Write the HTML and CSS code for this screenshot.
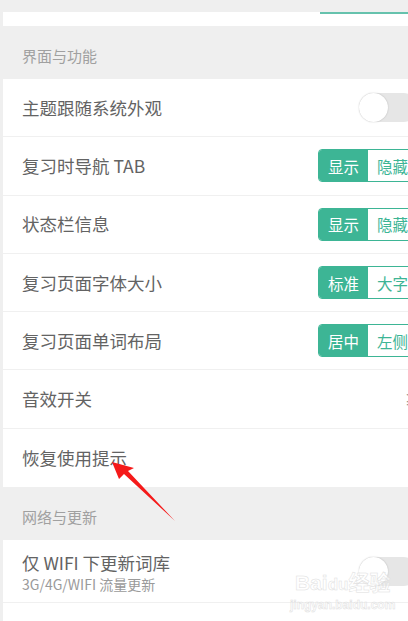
FILE: index.html
```html
<!DOCTYPE html>
<html lang="zh">
<head>
<meta charset="utf-8">
<link rel="stylesheet" href="styles.css">
</head>
<body>
<div class="page">
  <div class="top-card"><div class="top-line"></div></div>

  <div class="section-title">界面与功能</div>
  <div class="group">
    <div class="row">
      <span class="label">主题跟随系统外观</span>
      <span class="switch"><span class="knob"></span></span>
    </div>
    <div class="row">
      <span class="label">复习时导航 TAB</span>
      <span class="seg"><span class="seg-on">显示</span><span class="seg-off">隐藏</span></span>
    </div>
    <div class="row">
      <span class="label">状态栏信息</span>
      <span class="seg"><span class="seg-on">显示</span><span class="seg-off">隐藏</span></span>
    </div>
    <div class="row">
      <span class="label">复习页面字体大小</span>
      <span class="seg"><span class="seg-on">标准</span><span class="seg-off">大字</span></span>
    </div>
    <div class="row">
      <span class="label">复习页面单词布局</span>
      <span class="seg"><span class="seg-on">居中</span><span class="seg-off">左侧</span></span>
    </div>
    <div class="row">
      <span class="label">音效开关</span>
      <span class="edge-mark">≥</span>
    </div>
    <div class="row last">
      <span class="label">恢复使用提示</span>
    </div>
  </div>

  <div class="section-title">网络与更新</div>
  <div class="group">
    <div class="row tall">
      <span class="label-stack">
        <span class="label">仅 WIFI 下更新词库</span>
        <span class="sub">3G/4G/WIFI 流量更新</span>
      </span>
      <span class="switch"><span class="knob"></span></span>
    </div>
    <div class="row">
      <span class="label">词库更新</span>
    </div>
  </div>

  <div class="watermark"><span class="wm-main">Bai<span class="wm-du">du</span>经验</span><span class="wm-url">jingyan.baidu.com</span></div>

  <svg class="arrow" width="408" height="621" viewBox="0 0 408 621">
    <polygon points="112,462 134,468 128,471 175,521 124,474 119,479" fill="#f51a1a"/>
  </svg>
</div>
</body>
</html>
```

FILE: styles.css
```css
* { box-sizing: border-box; }
html, body {
  margin: 0;
  padding: 0;
  width: 408px;
  height: 621px;
  overflow: hidden;
  background: #efefef;
}
.page {
  position: relative;
  width: 408px;
  height: 621px;
  overflow: hidden;
  padding-top: 12px;
  padding-left: 3px;
  font-family: "Noto Sans CJK SC", "Noto Sans", sans-serif;
}
.top-card {
  height: 14px;
  background: #fff;
  display: flex;
  justify-content: flex-end;
}
.top-line {
  width: 88px;
  height: 2px;
  background: #66c2ad;
}
.section-title {
  height: 53px;
  padding: 20px 0 0 19px;
  font-size: 15px;
  line-height: 20px;
  color: #a0a0a0;
}
.group {
  background: #fff;
}
.row {
  height: 58.3px;
  border-bottom: 1px solid #f0f0f0;
  display: flex;
  align-items: center;
  justify-content: space-between;
  padding-left: 19px;
  margin-right: -10px;
}
.row.last { border-bottom: none; }
.row.tall { height: 63px; }
.label {
  font-size: 17.5px;
  color: #636363;
  line-height: 22px;
}
.label-stack {
  display: flex;
  flex-direction: column;
  padding-top: 2px;
}
.sub {
  font-size: 14px;
  color: #9a9a9a;
  line-height: 18px;
  margin-top: 1px;
}
.switch {
  position: relative;
  width: 59px;
  height: 29px;
  border-radius: 15px;
  background: #e6e6e6;
  flex: none;
}
.knob {
  position: absolute;
  left: 0;
  top: 0;
  width: 29px;
  height: 29px;
  border-radius: 50%;
  background: #fff;
  box-shadow: 0 0 1.5px rgba(0,0,0,0.25);
}
.seg {
  display: flex;
  height: 33px;
  width: 100px;
  flex: none;
  border: 1px solid #3db595;
  border-radius: 4px;
  overflow: hidden;
  font-size: 15.5px;
}
.seg-on {
  width: 49px;
  background: #3db595;
  color: #fff;
  display: flex;
  align-items: center;
  justify-content: center;
}
.seg-off {
  flex: 1;
  background: #fff;
  color: #3db595;
  display: flex;
  align-items: center;
  justify-content: center;
}
.edge-mark {
  font-size: 14px;
  color: #888;
  width: 13px;
  overflow: hidden;
}
.watermark {
  position: absolute;
  left: 290px;
  top: 570px;
  display: flex;
  flex-direction: column;
  align-items: center;
  color: rgba(255,255,255,0.5);
  -webkit-text-stroke: 0.5px #dedede;
  font-family: "Liberation Sans", "Noto Sans CJK SC", sans-serif;
}
.wm-main { font-size: 21px; line-height: 26px; font-weight: bold; }
.wm-du { font-size: 17px; }
.wm-url { font-size: 12px; line-height: 14px; font-weight: bold; }
.arrow {
  position: absolute;
  left: 0;
  top: 0;
  pointer-events: none;
}
```
